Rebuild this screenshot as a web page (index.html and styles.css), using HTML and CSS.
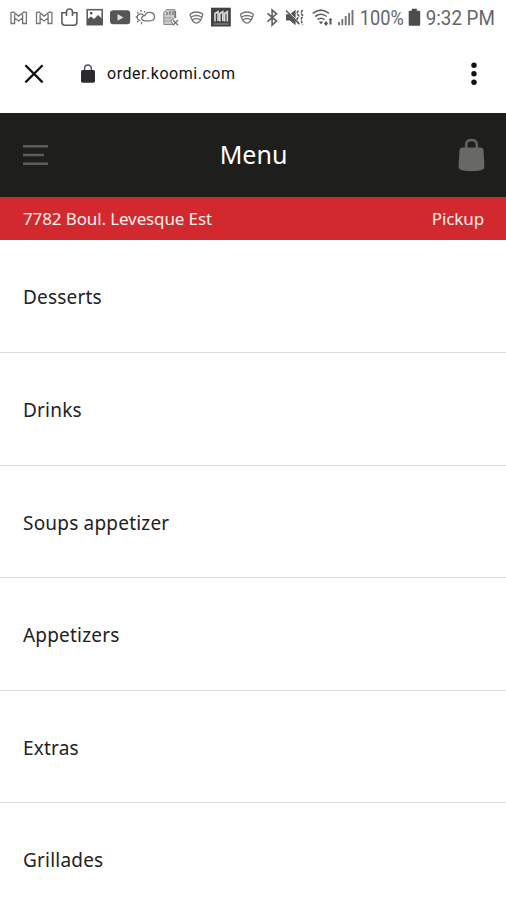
FILE: index.html
```html
<!DOCTYPE html>
<html lang="en">
<head>
<meta charset="utf-8">
<meta name="viewport" content="width=device-width, initial-scale=1">
<title>Menu</title>
<link rel="stylesheet" href="styles.css">
</head>
<body>
<div class="screen">
  <div class="status">
    <svg width="57" height="36" viewBox="0 0 57 36"><g class="line"><path id="mail" d="M11 12.5v11h3.6v-5.500l4 3 4-3v5.500h3.800v-11l-2.400-.6-5.400 4.200-5.200-4.200zM14.600 14.200v3.800M22.600 14.200v3.800"/><use href="#mail" x="25.5"/></g></svg>
    <svg width="26" height="36" viewBox="57 0 26 36"><path class="line bold" d="M66.2 12.7h-4.3V22q0 3.2 3 3.2h9q3 0 3-3.2v-9.3h-4.3M66.5 16v-4.2c0-3.7 6-3.7 6 0V16"/></svg>
    <svg width="24" height="36" viewBox="83 0 24 36"><rect class="line bold" x="87.2" y="9.7" width="15" height="15"/><path class="fill" d="M87 24.5v-5l4-3 3 2.5 4-4 4.500 4v6H87z"/><rect class="fill" x="90" y="12" width="2.4" height="2.4"/></svg>
    <svg width="26" height="36" viewBox="107 0 26 36"><rect class="fill" x="110" y="10.3" width="20.2" height="14" rx="3.2"/><path class="light" d="M117.5 14v6.7l6-3.3z"/></svg>
    <svg width="26" height="36" viewBox="133 0 26 36"><path class="line" d="M140.5 20.8a3.5 3.5 0 1 1 3-5.5M144 20.800c-3.500-1-2.500-5.500 1-5.200 1.400-5 9.500-3.800 9.500 1.200 0 3.200-2 4-4.600 4zM141 10v2M137 12l1.2 1.400M135.800 17h1.800M137 22.400l1.200-1.400M141.500 22v2.200M145 11l-.8 1.500"/></svg>
    <svg width="25" height="36" viewBox="159 0 25 36"><path class="doc" d="M166.5 9.6h8.3v8.2l-3.7 2.4 1.7 4.3h-9V12.4z"/><path class="line" d="M167 12v3M170 11v4M173 11v4M173 20l5 5.2M178 20l-5 5.2M175.5 11v7"/><path class="line faint" d="M164 18h8M164 21h7"/></svg>
    <svg width="24" height="36" viewBox="184 0 24 36"><path id="shield" class="line" d="M190 14.3c3.7-3.1 9.1-3.1 12.8 0l-1 3.400-2 3.600q-3.400 3.600-6.800 0l-2-3.600zM191.200 17q5.200-3 10.400 0M192.400 19.700q4-2.300 8 0"/></svg>
    <svg width="26" height="36" viewBox="208 0 26 36"><rect x="211" y="7.7" width="19.8" height="18.8" fill="#424242"/><path d="M215 21.5v-8l3-1.8V21M219.8 21.5v-8l3-1.8V21M224.6 21.5v-8l2.7-1.8v9.8" fill="none" stroke="#ddd" stroke-width="1.6"/><path d="M213.5 24h15" stroke="#999"/></svg>
    <svg width="26" height="36" viewBox="234 0 26 36"><use href="#shield" x="50.5"/></svg>
    <svg width="22" height="36" viewBox="260 0 22 36"><path class="line bold" d="M267.5 13.300l9 7.800-4.400 4V10l4.400 3.800-9 7.800"/></svg>
    <svg width="26" height="36" viewBox="282 0 26 36"><path class="fill" d="M286 14.2h3.800l5.800-4.400v15.400l-5.800-4.600H286z"/><path d="M287 10l13.500 13.800" stroke="#fff" stroke-width="1"/><path class="line bold" d="M286 10.500l13.500 13.800"/><path class="line bold" stroke-dasharray="3 1" d="M298.300 10.500l-1.500 3 2 2.500-2 3.500 1.500 4M302.500 10l-1.600 3 2 3-2 3.600 1.800 5.200"/></svg>
    <svg width="27" height="36" viewBox="308 0 27 36"><path class="line bold" d="M312.8 13.4q8-6.7 16.2 0M315.2 16.5q5.8-4.6 11.5 0M317.5 19.6q3.5-2.8 7 0"/><path class="fill" d="M318.7 21.500h4.600L321 24.200zM324 23.500l2-2.400 2 2.400-2 2.500zM330.500 18l2 2h-1v4.500h-2V20h-1z"/></svg>
    <svg width="23" height="36" viewBox="335 0 23 36"><path d="M339 22v3.2M342.3 19v6.2M345.7 16v9.2M349.1 13v12.2M352.500 10v15.200" stroke="#777" stroke-width="1.9"/></svg>
    <span class="percent">100%</span>
    <svg class="battery" width="14" height="36" viewBox="407 0 14 36"><path d="M411.800 8.800h5v2h2.400q1 0 1 1v13q0 1-1 1h-9.500q-1 0-1-1v-13q0-1 1-1h2.100z" fill="#4c4c4c"/></svg>
    <span class="time">9:32 PM</span>
  </div>
  <div class="browser">
    <svg class="close" width="20" height="20" viewBox="0 0 20 20"><path d="M1.4 1.2l17.2 17.2M18.6 1.2L1.4 18.4"/></svg>
    <svg class="lock" width="14" height="19" viewBox="0 0 14 19"><path d="M3.6 7V4.6c0-4.7 6.8-4.7 6.8 0V7" fill="none" stroke="#555" stroke-width="1.5"/><rect y="6" width="14" height="12.7" rx="1.6" fill="#292b2e"/></svg>
    <span class="url">order.koomi.com</span>
    <svg class="more" width="8" height="24" viewBox="0 0 8 24"><circle cx="4" cy="3.3" r="2.7"/><circle cx="4" cy="11.8" r="2.7"/><circle cx="4" cy="20.3" r="2.7"/></svg>
  </div>
  <header class="header">
    <svg width="26" height="22" viewBox="0 0 26 22"><path d="M0 2.300h25M0 11h21M0 19.700h25" stroke="#5c5c5a" stroke-width="2.4"/></svg>
    <h1>Menu</h1>
    <svg width="27" height="36" viewBox="0 0 27 36"><path d="M8.200 12V7.500q0-4.500 5.300-4.500t5.300 4.500V12" fill="none" stroke="#626260" stroke-width="2.600"/><path d="M4.500 10.500h18q2.700 0 3 3l.9 15.500q.1 3.500-3.500 4.300-9.400 2-18.800 0Q.5 32.500.6 29l.9-15.500q.3-3 3-3z" fill="#686866"/></svg>
  </header>
  <div class="location"><span class="address">7782 Boul. Levesque Est</span><span class="mode">Pickup</span></div>
  <ul class="list">
    <li><span>Desserts</span></li>
    <li><span>Drinks</span></li>
    <li><span>Soups appetizer</span></li>
    <li><span>Appetizers</span></li>
    <li><span>Extras</span></li>
    <li><span>Grillades</span></li>
  </ul>
</div>
</body>
</html>
```
FILE: styles.css
```css
* { box-sizing: border-box; }
body { margin: 0; background: #fff; font-family: "Noto Sans", sans-serif; }
svg { display: block; flex: none; }
.screen { width: 506px; height: 900px; overflow: hidden; }
.status { display: flex; height: 36px; font: 20px/36px Roboto, sans-serif; color: #666; white-space: nowrap; }
.line { fill: none; stroke: #747474; stroke-width: 1.3; }
.bold { stroke: #606060; stroke-width: 1.6; }
.faint { stroke: #aaa; }
.fill { fill: #555; }
.light { fill: #ddd; }
.doc { fill: #ccc; stroke: #888; }
.percent { width: 49px; padding-left: 2px; transform: scaleX(.91); transform-origin: left; }
.time { width: 84px; padding-left: 5px; transform: scaleX(.94); transform-origin: left; }
.browser { display: flex; align-items: center; height: 77px; padding: 0 28px 2px 24px; }
.close { fill: none; stroke: #111; stroke-width: 2.3; }
.lock { margin-left: 37px; }
.url { margin-left: 12px; font: 16px/20px Roboto, sans-serif; color: #111; letter-spacing: .53px; }
.more { margin-left: auto; fill: #111; }
.header { display: flex; align-items: center; justify-content: space-between; height: 84px; padding: 0 21px 0 23px; background: #1e1e1c; color: #fff; }
.header h1 { margin: 0; padding-bottom: 2px; font-size: 25px; font-weight: 400; line-height: 34px; }
.location { display: flex; align-items: center; justify-content: space-between; height: 42.500px; padding: 0 22px 0 23px; background: #d1292e; color: #fff0ef; font-size: 17px; }
.address { letter-spacing: -.12px; }
.mode { letter-spacing: -.1px; }
.list { list-style: none; margin: 0; padding: 0; color: #222; font-size: 19px; letter-spacing: .2px; }
.list li { display: flex; align-items: center; height: 112.5px; padding: 3px 0 0 23px; border-bottom: 1px solid #dcdcdc; }
.list li:first-child { height: 113.5px; }
```
